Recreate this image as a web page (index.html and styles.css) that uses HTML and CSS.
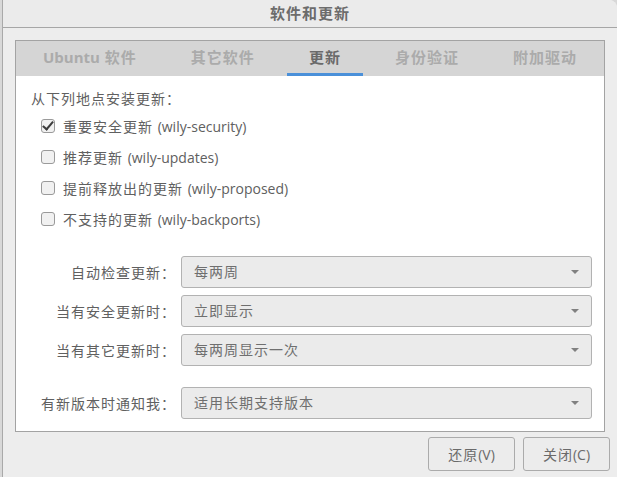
FILE: index.html
```html
<!DOCTYPE html>
<html lang="zh-CN">
<head>
    <meta charset="UTF-8">
    <title>软件和更新</title>
    <link rel="stylesheet" href="styles.css">
</head>
<body>
    <div class="window">
        <div class="titlebar">软件和更新</div>

        <div class="content">
            <!-- Notebook -->
            <div class="notebook">
                <div class="tabs">
                    <div class="tab"><span class="en">Ubuntu</span> 软件</div>
                    <div class="tab">其它软件</div>
                    <div class="tab active">更新</div>
                    <div class="tab">身份验证</div>
                    <div class="tab">附加驱动</div>
                </div>

                <div class="page">
                    <div class="heading">从下列地点安装更新：</div>
                    <label class="check"><span class="box checked"></span><span>重要安全更新 <span class="en">(wily-security)</span></span></label>
                    <label class="check"><span class="box"></span><span>推荐更新 <span class="en">(wily-updates)</span></span></label>
                    <label class="check"><span class="box"></span><span>提前释放出的更新 <span class="en">(wily-proposed)</span></span></label>
                    <label class="check"><span class="box"></span><span>不支持的更新 <span class="en">(wily-backports)</span></span></label>

                    <div class="options">
                        <div class="row">
                            <span class="label">自动检查更新：</span>
                            <div class="combo">每两周</div>
                        </div>
                        <div class="row">
                            <span class="label">当有安全更新时：</span>
                            <div class="combo">立即显示</div>
                        </div>
                        <div class="row">
                            <span class="label">当有其它更新时：</span>
                            <div class="combo">每两周显示一次</div>
                        </div>
                        <div class="row release">
                            <span class="label">有新版本时通知我：</span>
                            <div class="combo">适用长期支持版本</div>
                        </div>
                    </div>
                </div>
            </div>

            <div class="buttons">
                <button>还原<span class="en">(V)</span></button>
                <button>关闭<span class="en">(C)</span></button>
            </div>
        </div>
    </div>
</body>
</html>
```

FILE: styles.css
```css
html, body {
    margin: 0;
    height: 100%;
}
body {
    background: #d8d8d8;
    font-family: "Open Sans", "Noto Sans CJK SC", sans-serif;
    font-size: 14px;
    letter-spacing: 1px;
    color: #606060;
    overflow: hidden;
}
.en {
    letter-spacing: 0;
}
.window {
    margin-left: 2px;
    height: 100%;
    background: #ededed;
    border-left: 1px solid #a9a9a9;
    border-top-right-radius: 8px;
    display: flex;
    flex-direction: column;
}
.titlebar {
    height: 27px;
    line-height: 27px;
    text-align: center;
    font-weight: bold;
    font-size: 15px;
    color: #6c6c6c;
    background: #ebebeb;
    border-bottom: 1px solid #a6a6a6;
    border-top-right-radius: 8px;
}
.content {
    padding: 12px 7px 0 12px;
}
.notebook {
    margin-right: 5px;
    border: 1px solid #a3a3a3;
    background: #fff;
}
.tabs {
    display: flex;
    height: 35px;
    background: #d5d5d5;
}
.tab {
    flex: 1 1 auto;
    margin: 0 5px;
    padding: 0 18px;
    text-align: center;
    line-height: 33px;
    font-weight: bold;
    font-size: 15px;
    color: #ababab;
    border-bottom: 2px solid transparent;
}
.tab.active {
    color: #6a6a6a;
    border-bottom: 3px solid #4a90d9;
    line-height: 32px;
}
.page {
    height: 341px;
    padding: 14px 12px 0 15px;
}
.heading {
    height: 18px;
    line-height: 18px;
}
.check {
    display: flex;
    align-items: center;
    margin: 8px 0 0 10px;
    height: 19px;
}
.check + .check {
    margin-top: 12px;
}
.box {
    width: 12px;
    height: 12px;
    margin-right: 8px;
    border: 1px solid #9a9a9a;
    border-radius: 3px;
    background: #f1f1f1;
    position: relative;
}
.box.checked::after {
    content: "";
    position: absolute;
    left: 3px;
    top: -1px;
    width: 4px;
    height: 9px;
    border: solid #3c3c3c;
    border-width: 0 2px 2px 0;
    transform: rotate(40deg);
}
.options {
    margin-top: 28px;
}
.row {
    display: flex;
    align-items: center;
    margin-bottom: 7px;
}
.row.release {
    margin-top: 21px;
}
.label {
    width: 145px;
    padding-right: 5px;
    text-align: right;
}
.combo {
    flex: 1;
    height: 30px;
    line-height: 30px;
    padding: 0 12px;
    background: #ebebeb;
    border: 1px solid #b2b2b2;
    border-radius: 3px;
    color: #6f6f6f;
    position: relative;
}
.combo::after {
    content: "";
    position: absolute;
    right: 12px;
    top: 13px;
    border-left: 4px solid transparent;
    border-right: 4px solid transparent;
    border-top: 4px solid #808080;
}
.buttons {
    display: flex;
    justify-content: flex-end;
    gap: 8px;
    margin-top: 5px;
}
button {
    width: 87px;
    height: 34px;
    font-family: "Open Sans", "Noto Sans CJK SC", sans-serif;
    font-size: 14px;
    letter-spacing: 1px;
    color: #6a6a6a;
    background: #ececec;
    border: 1px solid #ababab;
    border-radius: 3px;
}
```
